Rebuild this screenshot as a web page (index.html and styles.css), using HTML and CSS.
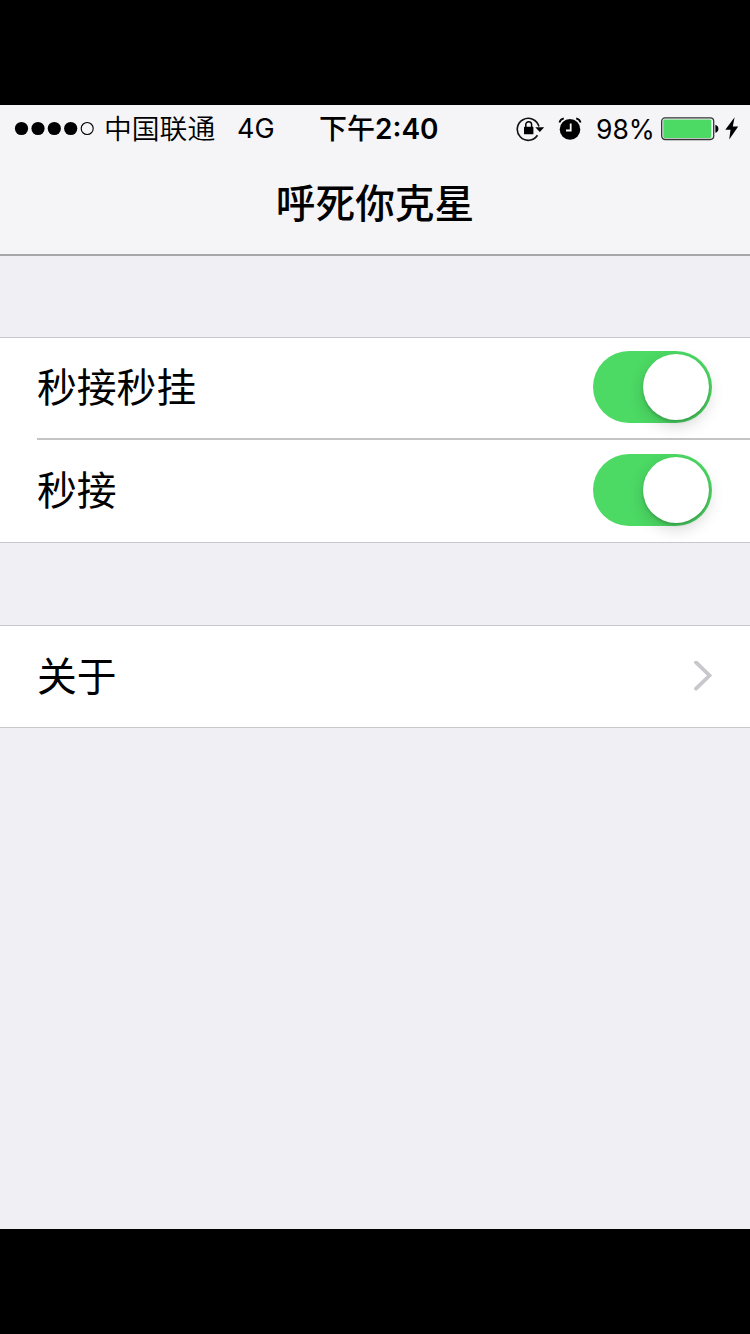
FILE: index.html
```
<!DOCTYPE html>
<html lang="zh-CN">
<head>
    <meta charset="UTF-8">
    <meta name="viewport" content="width=device-width, initial-scale=1.0">
    <title>呼死你克星</title>
    <link rel="stylesheet" href="styles.css">
</head>
<body>
    <div class="screen">
        <!-- Status bar -->
        <div class="status-bar">
            <svg class="signal" width="82" height="16" viewBox="0 0 82 16">
                <circle cx="7.5" cy="7.5" r="6.6"/>
                <circle cx="24" cy="7.5" r="6.6"/>
                <circle cx="40.3" cy="7.5" r="6.6"/>
                <circle cx="56.7" cy="7.5" r="6.6"/>
                <circle cx="73.2" cy="7.5" r="6" fill="none" stroke="#000" stroke-width="1.1"/>
            </svg>
            <span class="carrier">中国联通</span>
            <span class="network">4G</span>
            <span class="time">下午<b>2:40</b></span>
            <svg class="lock" width="30" height="26" viewBox="0 0 30 26">
                <path d="M21.5 19.3A11 11 0 1 1 22.9 10.5" fill="none" stroke="#111" stroke-width="1.6"/>
                <path d="M19.3 11.2h8.9l-4.4 4.8z"/>
                <rect x="8" y="10.8" width="9.4" height="7.5" rx="0.6"/>
                <path d="M9.8 11.5V8.6a2.9 2.9 0 0 1 5.8 0v2.9" fill="none" stroke="#000" stroke-width="1.5"/>
            </svg>
            <svg class="alarm" width="24" height="24" viewBox="0 0 24 24">
                <circle cx="12" cy="12.4" r="10.3"/>
                <path d="M1.4 5.4Q2.4 2.2 5.8 1.4M22.6 5.4Q21.6 2.2 18.2 1.4" fill="none" stroke="#000" stroke-width="1.8"/>
                <path d="M12.7 6.5v7H8" fill="none" stroke="#f5f5f8" stroke-width="1.8"/>
            </svg>
            <span class="percent">98%</span>
            <svg class="battery" width="58" height="24" viewBox="0 0 58 24">
                <rect x="0.7" y="0.9" width="52" height="21.6" rx="3.4" fill="none" stroke="#333" stroke-width="1.3"/>
                <rect x="2.3" y="2.5" width="48" height="18.4" rx="1.3" fill="#4cd964"/>
                <path d="M54.4 7.8q3 1 3 4t-3 4z"/>
            </svg>
            <svg class="bolt" width="14" height="24" viewBox="0 0 14 24">
                <path d="M9.6 0.2L0.3 12.8h5.2L4.2 22.6L13.2 9.6H7.8z"/>
            </svg>
        </div>

        <div class="nav-bar">呼死你克星</div>

        <!-- Settings -->
        <div class="group">
            <div class="row">
                <span>秒接秒挂</span>
                <div class="switch"><div class="knob"></div></div>
            </div>
            <div class="line"></div>
            <div class="row last">
                <span>秒接</span>
                <div class="switch"><div class="knob"></div></div>
            </div>
        </div>

        <div class="group">
            <div class="row about">
                <span>关于</span>
                <svg class="arrow" width="18" height="30" viewBox="0 0 18 30">
                    <path d="M2 1.4L15.6 14.5L2 27.6" fill="none" stroke="#c7c7cc" stroke-width="3.8" stroke-linecap="round"/>
                </svg>
            </div>
        </div>
    </div>
</body>
</html>
```

FILE: styles.css
```
* {
    box-sizing: border-box;
}
body {
    margin: 0;
    height: 1334px;
    padding: 105px 0;
    overflow: hidden;
    background-color: #000;
    color: #000;
    font-family: Inter, "Noto Sans CJK SC", sans-serif;
}
.screen {
    height: 1124px;
    background-color: #efeff4;
}
/* Status bar */
.status-bar {
    display: flex;
    align-items: center;
    height: 48px;
    padding-left: 14px;
    background-color: #f5f5f8;
    font-size: 26.5px;
    line-height: 48px;
    white-space: nowrap;
}
.status-bar svg {
    flex: none;
}
.carrier {
    width: 112px;
    margin-left: 8px;
    font-size: 27.8px;
    font-weight: 350;
}
.network {
    width: 38px;
    margin-left: 21px;
    font-size: 27px;
}
.time {
    width: 122px;
    margin-left: 44px;
    font-size: 28px;
    font-weight: 500;
}
.time b {
    font-weight: 600;
}
.lock {
    margin-left: 75px;
}
.alarm {
    margin-left: 12px;
}
.percent {
    width: 58px;
    margin-left: 14px;
}
.battery {
    margin-left: 7px;
}
.bolt {
    margin-left: 6px;
}
/* Title */
.nav-bar {
    height: 103px;
    border-bottom: 2px solid #a7a7aa;
    background-color: #f5f5f8;
    font-size: 39.7px;
    font-weight: 500;
    line-height: 103px;
    text-align: center;
}
/* List */
.group {
    margin-top: 81px;
    border-top: 1px solid #c8c7cc;
    border-bottom: 1px solid #c8c7cc;
    background-color: #fff;
    font-size: 39.8px;
}
.group + .group {
    margin-top: 82px;
}
.row {
    display: flex;
    justify-content: space-between;
    align-items: center;
    height: 100px;
    padding: 0 38px 2px 37px;
    line-height: 98px;
}
.row span {
    padding-top: 2px;
}
.row.last {
    height: 102px;
}
.row.about {
    height: 101px;
}
.line {
    height: 2px;
    margin-left: 37px;
    background-color: #c4c4c4;
}
.switch {
    display: flex;
    justify-content: flex-end;
    width: 119px;
    height: 72px;
    padding: 3px;
    border-radius: 36px;
    background-color: #4cd964;
}
.knob {
    width: 66px;
    height: 66px;
    border-radius: 50%;
    background-color: #fff;
    box-shadow: 0 6px 16px rgba(0, 0, 0, 0.16), 0 2px 3px rgba(0, 0, 0, 0.18);
}
```
